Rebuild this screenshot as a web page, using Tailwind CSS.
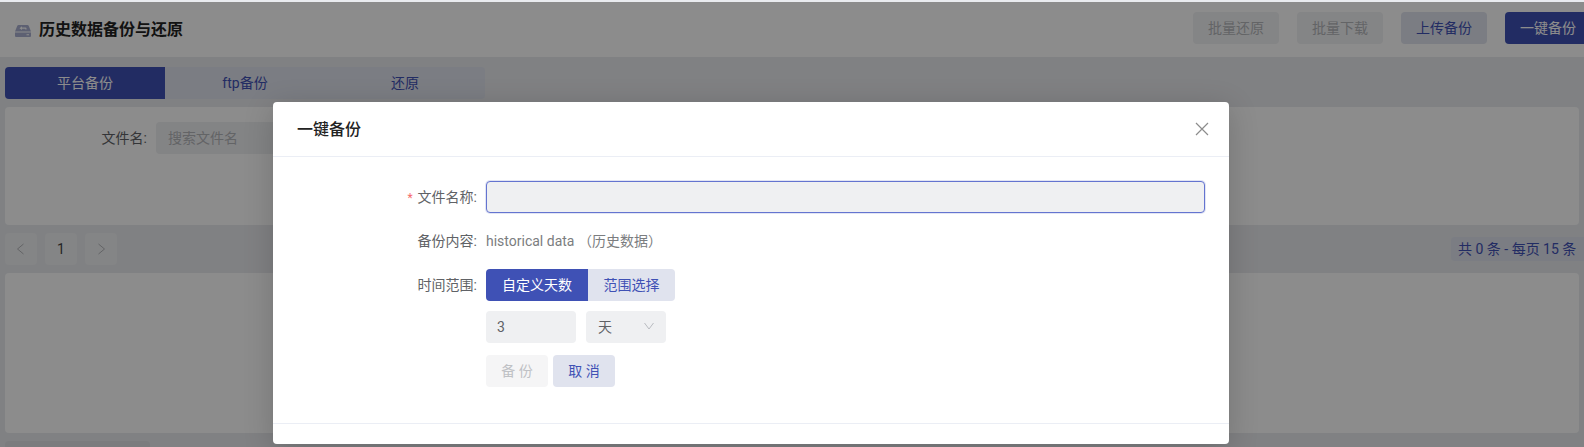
<!DOCTYPE html>
<html lang="zh-CN">
<head>
    <meta charset="UTF-8">
    <meta name="viewport" content="width=device-width, initial-scale=1.0">
    <script src="https://cdn.jsdelivr.net/npm/@tailwindcss/browser@4"></script>
    <title>历史数据备份与还原</title>
</head>
<body class="h-[447px] overflow-hidden bg-[#e9ebef] text-sm text-[#606266] font-['Roboto','Noto_Sans_CJK_SC',sans-serif]">
    <div class="relative h-[447px] overflow-hidden pt-[2px]">
        <!-- Header -->
        <div class="flex h-[55px] w-[1591px] items-center justify-between bg-white pl-[15px] pr-0">
            <div class="flex items-center gap-2">
                <svg class="mt-[2px] h-[12px] w-4 text-[#aab0d0]" viewBox="0 0 16 12" fill="currentColor">
                    <path fill-rule="evenodd" d="M3.5 0h9q.8 0 1.2.8L16 6.5H0L2.300.8Q2.700 0 3.500 0z M4.500 3.300 7 1.300v1.200h3.500q1 0 1 1v1h-1.200v-.8H7v1.200z"/>
                    <path fill-rule="evenodd" d="M0 7.500h16V11q0 1-1 1H1q-1 0-1-1z M11.500 9.200v1h2.500v-1z"/>
                </svg>
                <h1 class="text-base font-bold text-[#222]">历史数据备份与还原</h1>
            </div>
            <div class="flex gap-[18px] pb-[3px]">
                <button class="h-8 w-[86px] rounded bg-[#f1f2f4] text-[#b4b6ba]">批量还原</button>
                <button class="h-8 w-[86px] rounded bg-[#f1f2f4] text-[#b4b6ba]">批量下载</button>
                <button class="h-8 w-[86px] rounded bg-[#e0e3ee] text-[#3f51b5]">上传备份</button>
                <button class="h-8 w-[86px] rounded bg-[#3f51b5] text-white">一键备份</button>
            </div>
        </div>

        <!-- Tabs -->
        <div class="px-[5px] pt-[10px]">
            <div class="flex h-8 w-[480px] rounded bg-[#e0e3ee] text-[#3f51b5]">
                <div class="flex w-[160px] items-center justify-center rounded-l bg-[#3f51b5] text-white">平台备份</div>
                <div class="flex w-[160px] items-center justify-center">ftp备份</div>
                <div class="flex w-[160px] items-center justify-center">还原</div>
            </div>

            <!-- Filter -->
            <div class="mt-2 flex h-[118px] items-start rounded bg-white pt-[15px]">
                <label class="w-[151px] pr-[9px] text-right leading-8">文件名:</label>
                <div class="flex h-8 w-[200px] items-center rounded bg-[#eff0f2] px-3 text-[#b4b6ba]">搜索文件名</div>
            </div>

            <!-- Pager -->
            <div class="mt-2 flex h-8 w-[1591px] items-center justify-between">
                <div class="flex gap-2">
                    <button class="flex h-8 w-8 items-center justify-center rounded bg-[#f1f2f4] text-[#b4b6ba]">
                        <svg class="h-3 w-3" viewBox="0 0 12 12" fill="none" stroke="currentColor"><path d="M8.500 1 2.500 6l6 5"/></svg>
                    </button>
                    <button class="h-8 w-8 rounded bg-[#f1f2f4] text-[#444]">1</button>
                    <button class="flex h-8 w-8 items-center justify-center rounded bg-[#f1f2f4] text-[#b4b6ba]">
                        <svg class="h-3 w-3" viewBox="0 0 12 12" fill="none" stroke="currentColor"><path d="M3.500 1l6 5-6 5"/></svg>
                    </button>
                </div>
                <div class="mr-[5px] flex h-6 w-[140px] items-center whitespace-pre rounded bg-[#e0e3ee] pl-[7px] text-[#3f51b5]">共 0 条 - 每页 15 条</div>
            </div>

            <!-- Table card -->
            <div class="mt-2 h-[160px] rounded bg-white"></div>
            <div class="mt-2 h-2 w-[145px] rounded bg-[#e0e2e5]"></div>
        </div>

        <!-- Dialog mask -->
        <div class="absolute inset-x-0 bottom-0 top-[2px] bg-black/45"></div>

        <!-- Dialog -->
        <div class="absolute left-[273px] top-[102px] flex h-[342px] w-[956px] flex-col rounded bg-white shadow-[0_6px_30px_rgba(0,0,0,0.18)]">
            <div class="flex h-[55px] shrink-0 items-center justify-between border-b border-[#ebeef5] pl-6 pr-[20px]">
                <h2 class="pt-[1px] text-base font-medium text-[#222]">一键备份</h2>
                <svg class="h-[14px] w-[14px] text-[#8c8c8c]" viewBox="0 0 14 14" fill="none" stroke="currentColor" stroke-width="1.200"><path d="M1 1l12 12M13 1 1 13"/></svg>
            </div>

            <div class="flex-1 pr-6 pt-[24px]">
                <div class="flex items-center">
                    <label class="w-[213px] pr-[9px] text-right"><span class="mr-[5px] text-xs text-[#f56c6c]">*</span>文件名称:</label>
                    <div class="h-8 flex-1 rounded border border-[#6474d0] bg-[#eff0f2] shadow-[0_0_0_1px_rgba(63,81,181,0.15)]"></div>
                </div>
                <div class="mt-[12px] flex h-8 items-center">
                    <label class="w-[213px] pr-[9px] text-right">备份内容:</label>
                    <span class="text-[#7b7d80]">historical data （历史数据）</span>
                </div>
                <div class="mt-[12px] flex h-8 items-center">
                    <label class="w-[213px] pr-[9px] text-right">时间范围:</label>
                    <div class="flex h-8 overflow-hidden rounded">
                        <div class="flex w-[102px] items-center justify-center bg-[#3f51b5] text-white">自定义天数</div>
                        <div class="flex w-[87px] items-center justify-center bg-[#e0e3ee] text-[#3f51b5]">范围选择</div>
                    </div>
                </div>
                <div class="ml-[213px] mt-[10px] flex gap-[10px]">
                    <div class="flex h-8 w-[90px] items-center rounded bg-[#eff0f2] px-[11px]">3</div>
                    <div class="flex h-8 w-[80px] items-center justify-between rounded bg-[#eff0f2] pl-3 pr-3">
                        <span>天</span>
                        <svg class="mb-[3px] h-2 w-[10px] text-[#b8bbc0]" viewBox="0 0 10 8" fill="none" stroke="currentColor"><path d="M.5 1 5 7l4.500-6"/></svg>
                    </div>
                </div>
                <div class="ml-[213px] mt-3 flex gap-[5px]">
                    <button class="h-8 w-[62px] whitespace-pre rounded bg-[#f5f5f6] text-[#bfc1c5]">备 份</button>
                    <button class="h-8 w-[62px] whitespace-pre rounded bg-[#e0e3ee] text-[#3f51b5]">取 消</button>
                </div>
            </div>

            <div class="h-[21px] shrink-0 border-t border-[#ebeef5]"></div>
        </div>
    </div>
</body>
</html>
